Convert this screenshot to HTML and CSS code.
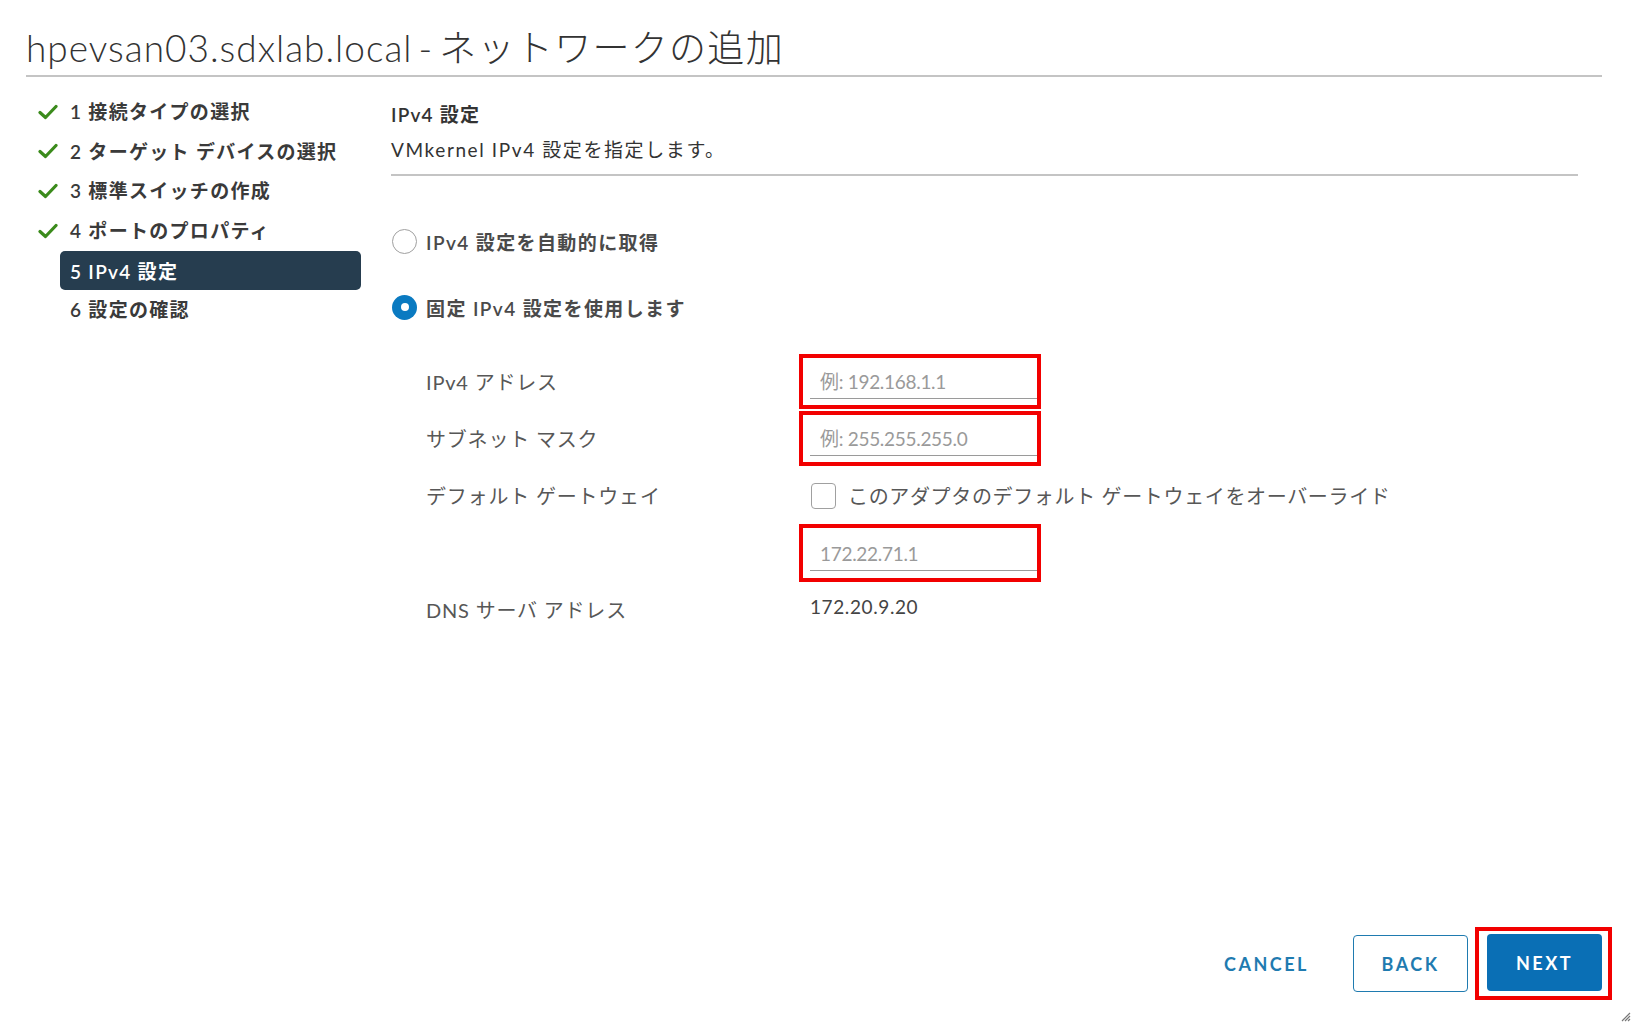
FILE: index.html
```html
<!DOCTYPE html>
<html lang="ja">
<head>
<meta charset="utf-8">
<title>ネットワークの追加</title>
<link rel="stylesheet" href="styles.css">
</head>
<body>
<div class="dialog">
  <h1 class="title">hpevsan03.sdxlab.local - <span class="title-ja">ネットワークの追加</span></h1>
  <div class="main">
    <nav class="steps">
      <div class="step done"><span class="check"><svg viewBox="0 0 20 16" width="20" height="16"><path d="M2 8.5 L7.5 13.5 L18 2.5" fill="none" stroke="#3b8b1c" stroke-width="3.2" stroke-linecap="round" stroke-linejoin="round"/></svg></span><span class="step-label">1 接続タイプの選択</span></div>
      <div class="step done"><span class="check"><svg viewBox="0 0 20 16" width="20" height="16"><path d="M2 8.5 L7.5 13.5 L18 2.5" fill="none" stroke="#3b8b1c" stroke-width="3.2" stroke-linecap="round" stroke-linejoin="round"/></svg></span><span class="step-label">2 ターゲット デバイスの選択</span></div>
      <div class="step done"><span class="check"><svg viewBox="0 0 20 16" width="20" height="16"><path d="M2 8.5 L7.5 13.5 L18 2.5" fill="none" stroke="#3b8b1c" stroke-width="3.2" stroke-linecap="round" stroke-linejoin="round"/></svg></span><span class="step-label">3 標準スイッチの作成</span></div>
      <div class="step done"><span class="check"><svg viewBox="0 0 20 16" width="20" height="16"><path d="M2 8.5 L7.5 13.5 L18 2.5" fill="none" stroke="#3b8b1c" stroke-width="3.2" stroke-linecap="round" stroke-linejoin="round"/></svg></span><span class="step-label">4 ポートのプロパティ</span></div>
      <div class="step"><span class="check"></span><span class="step-label active">5 IPv4 設定</span></div>
      <div class="step"><span class="check"></span><span class="step-label">6 設定の確認</span></div>
    </nav>
    <section class="content">
      <header class="content-head">
        <div class="content-title">IPv4 設定</div>
        <div class="content-desc">VMkernel IPv4 設定を指定します。</div>
      </header>
      <div class="radios">
        <label class="radio-row"><span class="radio"></span><span class="radio-text">IPv4 設定を自動的に取得</span></label>
        <label class="radio-row"><span class="radio checked"></span><span class="radio-text">固定 IPv4 設定を使用します</span></label>
      </div>
      <div class="form">
        <div class="label">IPv4 アドレス</div>
        <div class="value"><div class="hl"><div class="field placeholder">例: 192.168.1.1</div></div></div>
        <div class="label">サブネット マスク</div>
        <div class="value"><div class="hl"><div class="field placeholder">例: 255.255.255.0</div></div></div>
        <div class="label">デフォルト ゲートウェイ</div>
        <div class="value"><label class="cb-row"><span class="checkbox"></span><span class="cb-text">このアダプタのデフォルト ゲートウェイをオーバーライド</span></label></div>
        <div class="label"></div>
        <div class="value"><div class="hl hl-b"><div class="field placeholder">172.22.71.1</div></div></div>
        <div class="label">DNS サーバ アドレス</div>
        <div class="value dns">172.20.9.20</div>
      </div>
    </section>
  </div>
  <footer class="footer">
    <button class="btn btn-flat">CANCEL</button>
    <button class="btn btn-outline">BACK</button>
    <div class="hl-btn"><button class="btn btn-primary">NEXT</button></div>
  </footer>
  <svg class="grip" viewBox="0 0 12 12" width="12" height="12"><path d="M11 3 L3 11 M11 6 L6 11 M11 9 L9 11" stroke="#777" stroke-width="1.2"/></svg>
</div>
</body>
</html>
```

FILE: styles.css
```css
* { box-sizing: border-box; }
html, body { margin: 0; padding: 0; background: #fff; }
body {
  font-family: Lato, "Noto Sans CJK JP", sans-serif;
  color: #333;
}
.dialog {
  position: relative;
  height: 1022px;
  display: flex;
  flex-direction: column;
  padding: 0 29px 22px 26px;
}
.title {
  margin: 0;
  padding: 25px 0 5px 0;
  font-size: 37px;
  line-height: 45px;
  font-weight: 300;
  color: #333;
  border-bottom: 2px solid #c4c4c4;
  letter-spacing: 1px;
  word-spacing: -5px;
  white-space: nowrap;
}
.title-ja { letter-spacing: 1.3px; }
.main {
  flex: 1;
  display: flex;
  padding-left: 12px;
}
.steps {
  width: 323px;
  padding-top: 14px;
  margin-right: 30px;
  flex-shrink: 0;
}
.step {
  display: flex;
  align-items: center;
  height: 39.6px;
}
.check {
  width: 22px;
  display: flex;
  align-items: center;
  padding-top: 2px;
}
.step-label {
  flex: 1;
  height: 39px;
  display: flex;
  align-items: center;
  padding-left: 10px;
  font-size: 19px;
  font-weight: 600;
  letter-spacing: 1.3px;
  color: #3a3a3a;
  border-radius: 5px;
}
.step-label.active {
  background: #263d4f;
  color: #fff;
  margin-top: 3px;
}
.content {
  flex: 1;
  max-width: 1187px;
}
.content-head {
  padding-top: 23px;
  padding-bottom: 9px;
  border-bottom: 2px solid #c4c4c4;
}
.content-title {
  font-size: 19px;
  line-height: 30px;
  font-weight: 600;
  color: #333;
  letter-spacing: 1.2px;
}
.content-desc {
  margin-top: 5px;
  font-size: 19px;
  line-height: 30px;
  color: #333;
  letter-spacing: 1.6px;
}
.radios {
  margin-top: 45px;
  display: flex;
  flex-direction: column;
  gap: 26px;
}
.radio-row {
  display: flex;
  align-items: center;
  height: 40px;
}
.radio {
  width: 25px;
  height: 25px;
  border-radius: 50%;
  border: 1.5px solid #a0a0a0;
  background: #fff;
  margin-left: 1px;
  margin-right: 9px;
  flex-shrink: 0;
  display: flex;
  align-items: center;
  justify-content: center;
}
.radio.checked {
  border: none;
  background: #0a7ac1;
}
.radio.checked::after {
  content: "";
  width: 8px;
  height: 8px;
  border-radius: 50%;
  background: #fff;
}
.radio-text {
  font-size: 19px;
  font-weight: 600;
  color: #4a4a4a;
  letter-spacing: 1.4px;
}
.form {
  margin-top: 26px;
  display: grid;
  grid-template-columns: 384px 1fr;
  grid-auto-rows: 57px;
  align-items: center;
  padding-left: 35px;
}
.label {
  font-size: 20px;
  color: #575757;
  letter-spacing: 0.8px;
}
.value { display: flex; align-items: center; }
.hl {
  margin-left: -11px;
  border: 4px solid #f20000;
  padding: 4px 0 6px 7px;
  width: 242px;
  height: 55px;
}
.hl-b { height: 58px; padding-top: 6px; }
.field {
  width: 227px;
  height: 37px;
  border-bottom: 1.5px solid #9a9a9a;
  padding-top: 7px;
  padding-left: 10px;
  font-size: 19px;
  line-height: 26px;
}
.placeholder { color: #9a9a9a; letter-spacing: -0.3px; }
.cb-row {
  display: flex;
  align-items: center;
}
.checkbox {
  width: 25px;
  height: 26px;
  border: 1.5px solid #a0a0a0;
  border-radius: 4px;
  margin-left: 1px;
  margin-right: 12px;
}
.cb-text {
  font-size: 20px;
  color: #575757;
  letter-spacing: 0.65px;
}
.dns {
  font-size: 19px;
  color: #444;
  letter-spacing: 0.6px;
  padding-bottom: 6px;
}
.footer {
  display: flex;
  justify-content: flex-end;
  align-items: center;
  margin-right: -10px;
}
.btn {
  font-family: Lato, "Noto Sans", sans-serif;
  font-size: 18px;
  font-weight: 700;
  letter-spacing: 2.5px;
  height: 57px;
  width: 115px;
  border-radius: 4px;
  cursor: pointer;
  padding: 0;
}
.btn-flat {
  background: none;
  border: none;
  color: #1f7bb0;
  margin-right: 29px;
}
.btn-outline {
  background: #fff;
  border: 1.5px solid #1f7bb0;
  color: #1f7bb0;
  margin-right: 7px;
}
.hl-btn {
  border: 4px solid #f20000;
  padding: 3px 6px 5px 8px;
  display: flex;
}
.btn-primary {
  background: #0a6fb5;
  border: none;
  color: #fff;
}
.grip {
  position: absolute;
  right: 0;
  bottom: 0;
}
```
